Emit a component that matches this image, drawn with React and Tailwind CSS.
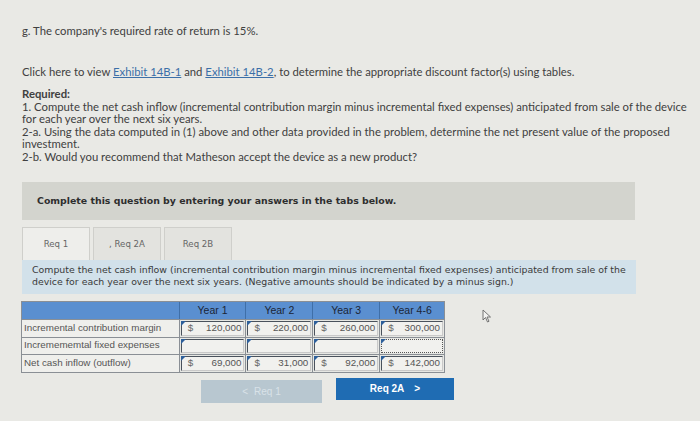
import React from "react";

const rows = [
  { label: "Incremental contribution margin", vals: ["120,000", "220,000", "260,000", "300,000"] },
  { label: "Incremememtal fixed expenses", vals: [null, null, null, null] },
  { label: "Net cash inflow  (outflow)", vals: ["69,000", "31,000", "92,000", "142,000"] },
];

const cols = ["Year 1", "Year 2", "Year 3", "Year 4-6"];
const widths = ["w-[67px]", "w-[67px]", "w-[67px]", "w-[65px]"];

const Cell = ({ value, dotted, w }) => (
  <div className={`${w} h-full border-l border-[#8a8f95] p-[1px] bg-[#e6e7e3]`}>
    <div
      className={`relative h-full flex items-center pl-[6px] pr-[2px] bg-[#f1f1ee] ${
        dotted
          ? "border border-dotted border-[#555]"
          : "border-t border-l border-t-[#4a525c] border-l-[#4a525c] border-r border-b border-r-[#c9c9c9] border-b-[#c9c9c9]"
      }`}
    >
      <span className="absolute -left-[1px] -top-[1px] w-0 h-0 border-t-[5px] border-r-[5px] border-t-[#2d5f9a] border-r-transparent" />
      {value && (
        <>
          <span className="text-[#666]">$</span>
          <span className="ml-auto text-[#555]">{value}</span>
        </>
      )}
    </div>
  </div>
);

const App = () => {
  return (
    <div className="w-[700px] h-[421px] overflow-hidden bg-[#e9e9e5] text-[#404040] font-['Lato','Open_Sans',sans-serif] text-[11.3px]">
      <div className="pt-[24px] pl-[22px]">
        <p className="leading-[13px]">g. The company's required rate of return is 15%.</p>
        <p className="leading-[13px] mt-[28px]">
          Click here to view{" "}
          <span className="underline text-[#3b6fa8]">Exhibit 14B-1</span> and{" "}
          <span className="underline text-[#3b6fa8]">Exhibit 14B-2</span>, to determine the appropriate discount factor(s) using tables.
        </p>
        <div className="mt-[10px] leading-[12.5px] pr-[6px]">
          <p className="font-bold">Required:</p>
          <p>
            1. Compute the net cash inflow (incremental contribution margin minus incremental fixed expenses) anticipated from sale of the device
            for each year over the next six years.
          </p>
          <p>
            2-a. Using the data computed in (1) above and other data provided in the problem, determine the net present value of the proposed
            investment.
          </p>
          <p>2-b. Would you recommend that Matheson accept the device as a new product?</p>
        </div>

        <div className="mt-[19px] w-[613px] h-[38px] bg-[#d3d4ce] flex items-center pl-[15px] font-['DejaVu_Sans',sans-serif] font-bold text-[9.4px] text-[#2e2e2e]">
          Complete this question by entering your answers in the tabs below.
        </div>

        <div className="mt-[7px] flex gap-[3px] h-[33px] font-['DejaVu_Sans',sans-serif] text-[8.6px] text-[#666]">
          <div className="w-[68px] bg-[#eeeeeb] border border-b-0 border-[#cfcfcb] flex items-center justify-center">Req 1</div>
          <div className="w-[68px] bg-[#e3e3df] border border-b-0 border-[#cfcfcb] flex items-center justify-center">, Req 2A</div>
          <div className="w-[68px] bg-[#e3e3df] border border-b-0 border-[#cfcfcb] flex items-center justify-center">Req 2B</div>
        </div>

        <div className="w-[614px] h-[34px] bg-[#d2e1ea] pl-[10px] pt-[4px] font-['DejaVu_Sans',sans-serif] text-[9.4px] leading-[12px] text-[#3a3a3a]">
          <p>Compute the net cash inflow (incremental contribution margin minus incremental fixed expenses) anticipated from sale of the</p>
          <p>device for each year over the next six years. (Negative amounts should be indicated by a minus sign.)</p>
        </div>

        <div className="mt-[7px] -ml-[1px] w-[424px] border border-[#8a8f95] font-['Liberation_Sans',Arial,sans-serif] text-[9.8px]">
          <div className="flex h-[17px] bg-[#5a8fd0] text-[#1a2536] text-[10.5px]">
            <div className="w-[157px]" />
            {cols.map((c, i) => (
              <div key={c} className={`${widths[i]} border-l border-[#3f6fa8] flex items-center justify-center`}>
                {c}
              </div>
            ))}
          </div>
          {rows.map((r, ri) => (
            <div key={r.label} className="flex h-[17.5px] border-t border-[#8a8f95]">
              <div className="w-[157px] bg-[#efefec] flex items-center pl-[2px] text-[#555]">{r.label}</div>
              {r.vals.map((v, i) => (
                <Cell key={i} value={v} w={widths[i]} dotted={ri === 1 && i === 3} />
              ))}
            </div>
          ))}
        </div>

        <div className="mt-[7px] flex font-['Liberation_Sans',Arial,sans-serif] text-[10px] font-bold">
          <div className="ml-[179px] w-[121px] h-[23px] bg-[#b8c7d0] text-[#d8e2e8] flex items-center justify-center gap-[6px] font-normal">
            <span>&lt;</span>
            <span>Req 1</span>
          </div>
          <div className="ml-[14px] w-[118px] h-[22px] -mt-[2px] bg-[#1f6cb3] text-white flex items-center justify-center gap-[10px]">
            <span>Req 2A</span>
            <span>&gt;</span>
          </div>
        </div>
      </div>

      <svg className="absolute left-[482px] top-[309px]" width="10" height="14" viewBox="0 0 10 14">
        <path d="M1 1 L1 11 L3.5 8.5 L5.5 13 L7 12.3 L5 8 L8.5 8 Z" fill="#f2f2f0" stroke="#666" strokeWidth="0.9" />
      </svg>
    </div>
  );
};

export default App;
